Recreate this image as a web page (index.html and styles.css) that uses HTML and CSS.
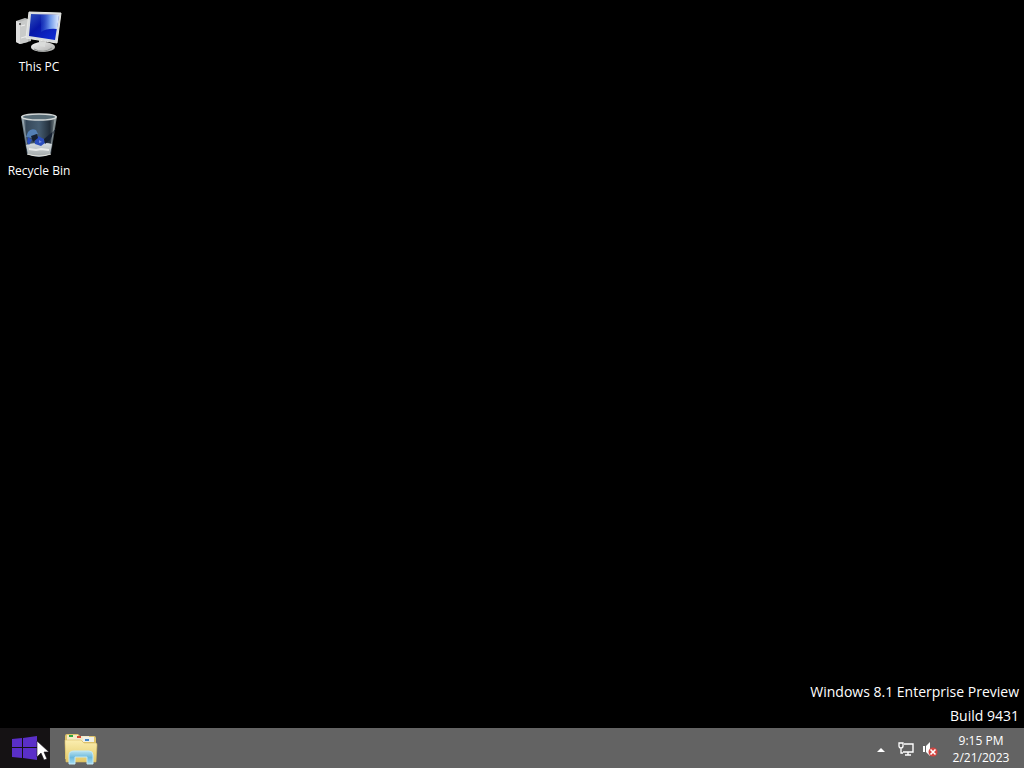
FILE: index.html
```html
<!DOCTYPE html>
<html lang="en">
<head>
<meta charset="utf-8">
<title>Desktop</title>
<link rel="stylesheet" href="styles.css">
</head>
<body>
<main class="desktop">
  <nav class="shortcuts" aria-label="Desktop shortcuts">
    <button class="shortcut" type="button">
      <svg class="shortcut-icon" viewBox="0 0 48 48" aria-hidden="true">
        <defs>
          <linearGradient id="screen" x1="0" y1="0" x2="1" y2="1">
            <stop offset="0" stop-color="#2c50bb"/><stop offset=".4" stop-color="#0717a8"/><stop offset="1" stop-color="#1030dc"/>
          </linearGradient>
          <linearGradient id="shine" x1="0" y1="0" x2="1" y2="0">
            <stop offset="0" stop-color="#2d55cf" stop-opacity=".3"/><stop offset=".5" stop-color="#6c96ea"/><stop offset="1" stop-color="#e3efff"/>
          </linearGradient>
          <linearGradient id="stand" x1="0" y1="0" x2="1" y2="1">
            <stop offset="0" stop-color="#f4f4f4"/><stop offset="1" stop-color="#a9aaa8"/>
          </linearGradient>
        </defs>
        <path d="M1 14l9-3 6 2v21l-11 3-4-2z" fill="#b9bbba"/>
        <path d="M1 14l4 1v22l-4-2z" fill="#dedede"/>
        <path d="M5 15l8-3v23l-8 2z" fill="#c9cbca"/>
        <path d="M6 19l4-1M6 31l7-2" stroke="#eee"/>
        <circle cx="5" cy="17" r="1" fill="#444"/>
        <path d="M24 33l7 1v8h-7z" fill="#b8bab9"/>
        <ellipse cx="28" cy="40" rx="12" ry="5" fill="url(#stand)"/>
        <path d="M19 42q9 5 18-1" stroke="#8e9190" fill="none"/>
        <path d="M24 34l6 1v5l-5-1z" fill="#dadcda"/>
        <path d="M14 5l32 1-4 30-31-5z" fill="#d8dcdf"/>
        <path d="M16 7l28 1-4 25-26-4z" fill="url(#screen)"/>
        <path d="M26 8l18 0-2 14q-10-1-16 3z" fill="url(#shine)"/>
        <path d="M14 5l32 1-4 30-31-5z" fill="none" stroke="#e8e9e5"/>
      </svg>
      <span>This PC</span>
    </button>
    <button class="shortcut" type="button">
      <svg class="shortcut-icon" viewBox="0 0 48 48" aria-hidden="true">
        <defs>
          <linearGradient id="glass" x1="0" y1="0" x2="1" y2="0">
            <stop offset="0" stop-color="#a8b9c0"/><stop offset=".15" stop-color="#36485a"/><stop offset=".5" stop-color="#465d71"/><stop offset=".8" stop-color="#222e3a"/><stop offset="1" stop-color="#95a09f"/>
          </linearGradient>
          <linearGradient id="paper" x1="0" y1="0" x2="0" y2="1">
            <stop offset="0" stop-color="#d5dce1"/><stop offset="1" stop-color="#a3a8a8"/>
          </linearGradient>
        </defs>
        <path d="M6 5l6 38q12 6 24 0l6-38z" fill="url(#glass)"/>
        <path d="M11 34q7-3 12-1 8-2 14 0l-2 10q-11 5-22 0z" fill="url(#paper)"/>
        <path d="M14 38l7 1 5-1 8 1" stroke="#e9ebea" stroke-width="2" fill="none"/>
        <path d="M13 21q3-4 8-2l2 4-4 1-2 3-6-1z" fill="#5480b5"/>
        <path d="M13 26l4 3-3 5-2-3zM20 29l3-4 6 3 1 4-4 3-6-2z" fill="#2b4ebd"/>
        <path d="M16 25l6-2 1 4-5 4zM29 28l12-10-6 11-5 4z" fill="#162132"/>
        <path d="M24 29l3 2-3 1" fill="#7690e2"/>
        <path d="M8 8l5 34M40 8l-5 34" stroke="#c3cbcc" opacity=".5"/>
        <ellipse cx="24" cy="6" rx="17" ry="3" fill="#586c76" stroke="#d2d7d7" stroke-width="1.5"/>
        <path d="M12 43q12 4 24 0" stroke="#e5e5e0" fill="none"/>
      </svg>
      <span>Recycle Bin</span>
    </button>
  </nav>
  <p class="watermark">Windows 8.1 Enterprise Preview<br>Build 9431</p>
</main>
<footer class="taskbar">
  <button class="start" type="button" aria-label="Start">
    <svg class="start-logo" viewBox="0 0 28 26" aria-hidden="true">
      <path d="M1 4l10-1v9H1zM12 3l14-2v11H12zM1 13h10v10L1 22zM12 13h14v12l-14-2z" fill="#5a2fc8"/>
    </svg>
    <svg class="pointer" viewBox="0 0 14 22" aria-hidden="true">
      <path d="M1 1v16l4-4 3 7 3-1-3-7h5z" fill="#fff" stroke="#17131c" stroke-width=".6"/>
    </svg>
  </button>
  <button class="explorer" type="button" aria-label="File Explorer">
    <svg class="explorer-icon" viewBox="0 0 36 34" aria-hidden="true">
      <defs>
        <linearGradient id="folder" x1="0" y1="0" x2="0" y2="1">
          <stop offset="0" stop-color="#fbeeb0"/><stop offset=".5" stop-color="#efdc8c"/><stop offset="1" stop-color="#e3c765"/>
        </linearGradient>
        <linearGradient id="holder" x1="0" y1="0" x2="0" y2="1">
          <stop offset="0" stop-color="#b8e2ef"/><stop offset=".5" stop-color="#6cb9dd"/><stop offset="1" stop-color="#a5dcf2"/>
        </linearGradient>
      </defs>
      <path d="M2 27V4q0-2 2-2h11l2 2h14q2 0 2 2v21z" fill="#dfc46b"/>
      <path d="M4 3h11v5H4z" fill="#f6ebc4"/><path d="M6 3h4v2H6z" fill="#32a53d"/>
      <path d="M12 4h14v5H12z" fill="#f3e9c9"/><path d="M14 4h4v2h-4z" fill="#d64b35"/>
      <path d="M20 5h11v5H20z" fill="#f0f0e6"/><path d="M22 7h4v2h-4z" fill="#4286c8"/>
      <path d="M2 8h16l3 3h12q1 0 1 2l-1 17H3L2 11z" fill="url(#folder)" stroke="#d9bd66" stroke-width=".6"/>
      <path d="M6 32v-9q0-4 5-4h15q4 0 4 4v9h-6v-7H12v7z" fill="url(#holder)" stroke="#c2e8f4"/>
    </svg>
  </button>
  <div class="tray">
    <button class="tray-button" type="button" aria-label="Show hidden icons">
      <svg class="tray-icon" viewBox="0 0 18 18" aria-hidden="true"><path d="M4 12l4-4 4 4z" fill="#fff"/></svg>
    </button>
    <button class="tray-button" type="button" aria-label="Network">
      <svg class="tray-icon" viewBox="0 0 18 18" aria-hidden="true">
        <path d="M7 4h9v8H6M11 12v3M8 15h6" fill="none" stroke="#fff" stroke-width="1.4"/>
        <path d="M2 3h4v3q0 2-2 2T2 6zM4 8v5h2" fill="none" stroke="#fff" stroke-width="1.3"/>
      </svg>
    </button>
    <button class="tray-button" type="button" aria-label="Volume muted">
      <svg class="tray-icon" viewBox="0 0 18 18" aria-hidden="true">
        <path d="M2 6h2v6H2zM5 6l4-4v14l-4-4z" fill="#fff"/>
        <circle cx="12" cy="12" r="4.5" fill="#d34642"/>
        <path d="M9.500 9.500l5 5M14.500 9.500l-5 5" stroke="#fff" stroke-width="1.6"/>
      </svg>
    </button>
    <button class="clock" type="button"><time datetime="2023-02-21T21:15">9:15 PM<br>2/21/2023</time></button>
  </div>
</footer>
</body>
</html>
```
FILE: styles.css
```css
* {
  box-sizing: border-box;
}

body {
  display: flex;
  flex-direction: column;
  min-height: 100vh;
  margin: 0;
  background: #000;
  color: #fff;
  font-family: "Open Sans", "Noto Sans", sans-serif;
}

button {
  padding: 0;
  border: 0;
  background: transparent;
  color: inherit;
  font: inherit;
}

svg {
  display: block;
}

.desktop {
  display: flex;
  flex: 1;
  flex-direction: column;
  justify-content: space-between;
  padding: 7px 5px 0 2px;
}

.shortcuts {
  display: flex;
  flex-direction: column;
  align-items: flex-start;
  gap: 36px;
}

.shortcut {
  display: flex;
  flex-direction: column;
  align-items: center;
  gap: 3px;
  width: 74px;
  font-size: 12px;
  line-height: 17px;
}

.shortcut-icon {
  width: 48px;
  height: 48px;
}

.watermark {
  margin: 0;
  font-size: 14px;
  line-height: 24px;
  text-align: right;
}

.taskbar {
  display: flex;
  height: 40px;
  background: #636363;
}

.start {
  position: relative;
  display: flex;
  align-items: center;
  width: 50px;
  padding-left: 11px;
  background: #151214;
}

.start-logo {
  width: 28px;
  height: 26px;
}

.pointer {
  position: absolute;
  top: 12px;
  left: 36px;
  width: 14px;
  height: 22px;
}

.explorer {
  display: flex;
  align-items: center;
  justify-content: center;
  width: 62px;
  padding-top: 2px;
}

.explorer-icon {
  width: 36px;
  height: 34px;
}

.tray {
  display: flex;
  align-items: center;
  margin-left: auto;
}

.tray-button {
  display: flex;
  align-items: center;
  justify-content: center;
  width: 24px;
  height: 40px;
  padding-top: 2px;
}

.tray-icon {
  width: 18px;
  height: 18px;
}

.clock {
  width: 82px;
  padding: 2px 4px 0 0;
  font-size: 12px;
  line-height: 17px;
  text-align: center;
}
```
